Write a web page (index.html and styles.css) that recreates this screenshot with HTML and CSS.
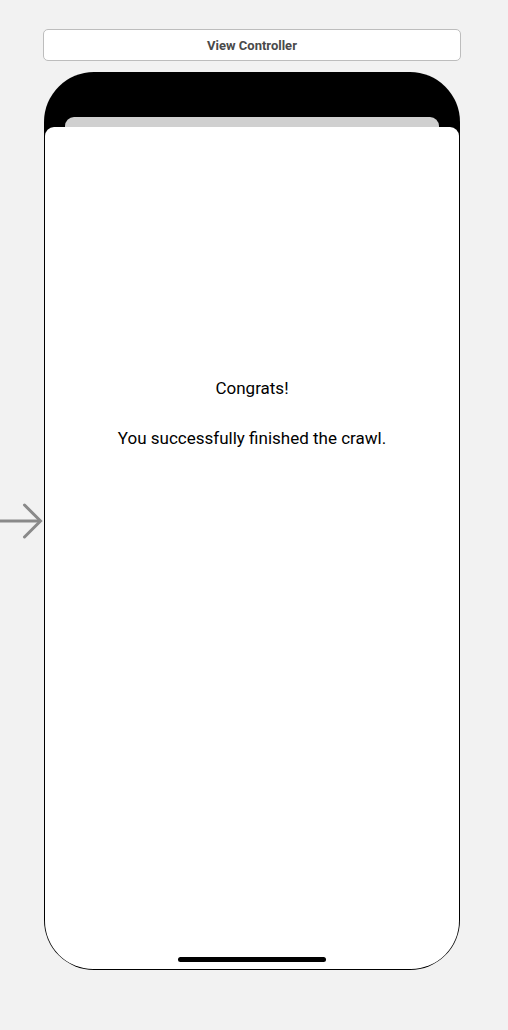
FILE: index.html
```html
<!DOCTYPE html>
<html>
<head>
<meta charset="utf-8">
<link rel="stylesheet" href="styles.css">
</head>
<body>
<div class="canvas">
  <div class="title-bar">View Controller</div>
  <div class="scene-row">
    <svg class="entry-arrow" width="44" height="40" viewBox="0 0 44 40">
      <path d="M0 20 H40.5" stroke="#8a8a8a" stroke-width="3" fill="none"/>
      <path d="M24.5 4 L40.5 20 L24.5 36" stroke="#8a8a8a" stroke-width="3" fill="none" stroke-linecap="round" stroke-linejoin="miter"/>
    </svg>
    <div class="phone">
      <div class="sheet-back"></div>
      <div class="screen">
        <div class="content">
          <p class="line congrats">Congrats!</p>
          <p class="line message">You successfully finished the crawl.</p>
        </div>
        <div class="home-indicator"></div>
      </div>
    </div>
  </div>
</div>
</body>
</html>
```

FILE: styles.css
```css
html, body {
  margin: 0;
  padding: 0;
  background: #f2f2f2;
}
.canvas {
  width: 508px;
  height: 1030px;
  padding-top: 29px;
  box-sizing: border-box;
  font-family: "Roboto", "Liberation Sans", sans-serif;
}
.title-bar {
  margin-left: 43px;
  width: 418px;
  height: 32px;
  box-sizing: border-box;
  border: 1px solid #bdbdbd;
  border-radius: 5px;
  background: #ffffff;
  display: flex;
  align-items: center;
  justify-content: center;
  font-family: "Roboto", "Liberation Sans", sans-serif;
  font-weight: 700;
  font-size: 13px;
  color: #4a4a4a;
}
.scene-row {
  margin-top: 11px;
  display: flex;
  align-items: center;
}
.entry-arrow {
  flex: 0 0 44px;
  display: block;
}
.phone {
  width: 416px;
  height: 898px;
  box-sizing: border-box;
  background: #000;
  border-radius: 50px / 50px;
  padding: 45px 1px 1px 1px;
  display: flex;
  flex-direction: column;
  overflow: hidden;
}
.sheet-back {
  flex: 0 0 auto;
  height: 14px;
  margin: 0 20px -4px 20px;
  background: #d0d0d0;
  border-radius: 9px 9px 0 0;
}
.screen {
  flex: 1 1 auto;
  background: #fff;
  border-radius: 9px 9px 48px 48px;
  display: flex;
  flex-direction: column;
  align-items: center;
  position: relative;
}
.content {
  flex: 1 1 auto;
  padding-top: 249px;
  display: flex;
  flex-direction: column;
  align-items: center;
  gap: 26px;
}
.line {
  margin: 0;
  font-size: 17px;
  line-height: 24px;
  color: #000;
}
.home-indicator {
  width: 148px;
  height: 5px;
  border-radius: 3px;
  background: #000;
  margin-bottom: 7px;
}
```
